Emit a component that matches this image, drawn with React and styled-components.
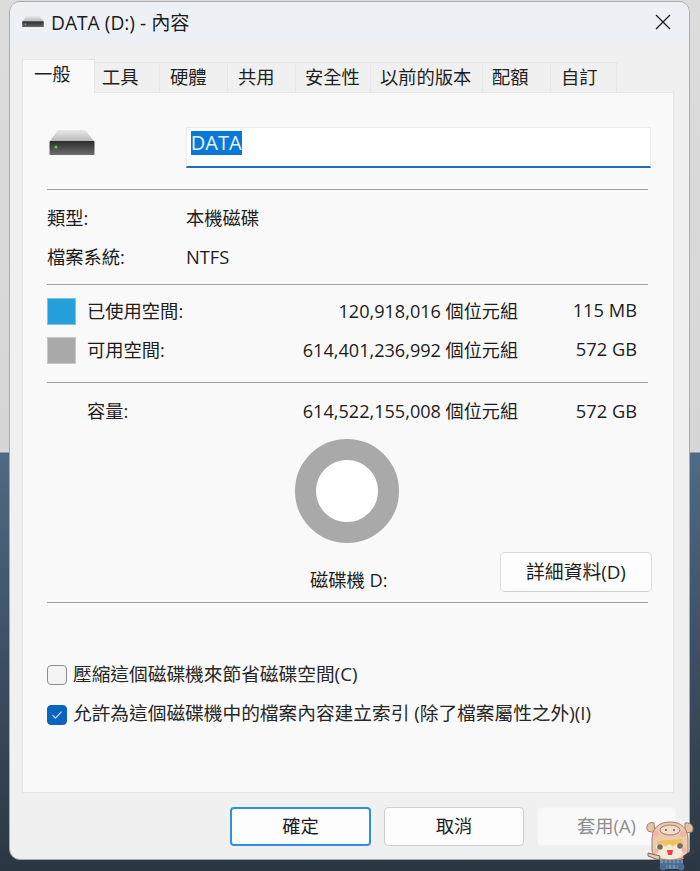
import React from "react";
import styled, { createGlobalStyle } from "styled-components";

const GlobalStyle = createGlobalStyle`
  html, body {
    margin: 0;
    padding: 0;
  }
  body {
    width: 700px;
    height: 871px;
    overflow: hidden;
    font-family: "Open Sans", "Noto Sans CJK TC", sans-serif;
  }
`;

const tabs = [
  { label: "一般", width: 73, pad: 11, active: true },
  { label: "工具", width: 65, pad: 7 },
  { label: "硬體", width: 68, pad: 10 },
  { label: "共用", width: 68, pad: 10 },
  { label: "安全性", width: 75, pad: 9 },
  { label: "以前的版本", width: 112, pad: 9 },
  { label: "配額", width: 68, pad: 9 },
  { label: "自訂", width: 66, pad: 10 },
];

const DriveIcon = ({ size = 46, id = "big" }) => (
  <svg width={size} height={size * 0.5435} viewBox="0 0 46 25">
    <defs>
      <linearGradient id={`${id}Top`} x1="0" y1="0" x2="0" y2="1">
        <stop offset="0" stopColor="#e8e8e8" />
        <stop offset="1" stopColor="#b9b9b9" />
      </linearGradient>
      <linearGradient id={`${id}Front`} x1="0" y1="0" x2="0" y2="1">
        <stop offset="0" stopColor="#2b2b2b" />
        <stop offset="1" stopColor="#6f6f6f" />
      </linearGradient>
    </defs>
    <path d="M9 0h27l9 11H1z" fill={`url(#${id}Top)`} />
    <rect x="0.5" y="11" width="45" height="14" rx="1" fill={`url(#${id}Front)`} />
    <circle cx="7" cy="17" r="1.6" fill="#3ddc3d" />
  </svg>
);

const Mascot = () => (
  <svg width="50" height="51" viewBox="0 0 50 51">
    <path d="M9 3C3 1 0 7 3 11l7 2zM40 3c6-1 10 4 7 9l-7 1z" fill="#e6c2a4" stroke="#9a7f6c" strokeWidth="1" />
    <path d="M7 20C7 8 14 2 25 2s18 6 18 18v10c0 7-8 10-18 10S7 37 7 30z" fill="#ebcbae" stroke="#9a7f6c" strokeWidth="1" />
    <ellipse cx="25" cy="10" rx="10" ry="5" fill="#f3dcc7" stroke="#9a7f6c" strokeWidth="1" />
    <circle cx="21" cy="10" r="1" fill="#7a5c4a" />
    <circle cx="29" cy="10" r="1" fill="#7a5c4a" />
    <circle cx="11" cy="14" r="3" fill="#f3b3ae" />
    <circle cx="38" cy="14" r="3" fill="#f3b3ae" />
    <path d="M12 21l25-2 1 8-5-3-3 3-4-3-4 3-3-3-7 4z" fill="#f1c15c" />
    <path d="M11 25l6-1 3 3 4-3 4 3 3-3 3 0 4 3v5c0 5-6 7-13 7s-14-2-14-7z" fill="#f7ead9" />
    <circle cx="15" cy="27" r="2.8" fill="#6f6a66" />
    <circle cx="35" cy="26" r="2.8" fill="#6f6a66" />
    <path d="M22 30h6l-1 5h-4z" fill="#e5453f" />
    <circle cx="11" cy="31" r="2.6" fill="#f3b3ae" />
    <circle cx="39" cy="30" r="2.6" fill="#f3b3ae" />
    <path d="M3 33l12 3-1 4-11-4z" fill="#ebcbae" stroke="#594a42" strokeWidth="0.8" />
    <path d="M38 36l11-7 1 4-11 7z" fill="#3c3c40" />
    <rect x="15" y="40" width="23" height="9" fill="#6e8fb2" />
    <path d="M19 40v9M23 40v9M27 40v9M31 40v9M35 40v9M15 44h23" stroke="#3b5a7c" strokeWidth="1" />
    <circle cx="18" cy="47" r="3.4" fill="#4d6c8c" />
    <circle cx="36" cy="47" r="3.4" fill="#4d6c8c" />
  </svg>
);

const App = () => (
  <>
    <GlobalStyle />
    <Screen>
      <WindowFrame>
        <TitleBar>
          <TitleIcon>
            <DriveIcon size={22} id="small" />
          </TitleIcon>
          <TitleText>DATA (D:) - 內容</TitleText>
          <CloseButton>
            <svg width="16" height="16" viewBox="0 0 16 16">
              <path d="M1 1l14 14M15 1L1 15" stroke="#1a1a1a" strokeWidth="1.3" fill="none" />
            </svg>
          </CloseButton>
        </TitleBar>

        <TabRow>
          {tabs.map((t) => (
            <Tab key={t.label} $active={t.active} $width={t.width} $pad={t.pad}>
              {t.label}
            </Tab>
          ))}
        </TabRow>

        <Panel>
          <NameRow>
            <BigIconBox>
              <DriveIcon />
            </BigIconBox>
            <NameInput>
              <Selected>DATA</Selected>
            </NameInput>
          </NameRow>
          <Divider />

          <InfoRow>
            <InfoLabel>類型:</InfoLabel>
            <span>本機磁碟</span>
          </InfoRow>
          <InfoRow>
            <InfoLabel>檔案系統:</InfoLabel>
            <span>NTFS</span>
          </InfoRow>
          <Divider $top={16} />

          <SpaceRow $top={13}>
            <Swatch $color="#26a0da" $border="#7cc5ea" />
            <SpaceLabel>已使用空間:</SpaceLabel>
            <Bytes>120,918,016 個位元組</Bytes>
            <Human>115 MB</Human>
          </SpaceRow>
          <SpaceRow $top={12}>
            <Swatch $color="#a9a9a9" $border="#c6c6c6" />
            <SpaceLabel>可用空間:</SpaceLabel>
            <Bytes>614,401,236,992 個位元組</Bytes>
            <Human>572 GB</Human>
          </SpaceRow>
          <Divider $top={18} />

          <SpaceRow $top={17} $short>
            <SwatchGap />
            <SpaceLabel>容量:</SpaceLabel>
            <Bytes>614,522,155,008 個位元組</Bytes>
            <Human>572 GB</Human>
          </SpaceRow>

          <Donut />

          <DriveRow>
            <DriveLabel>磁碟機 D:</DriveLabel>
            <DetailButton>詳細資料(D)</DetailButton>
          </DriveRow>
          <Divider $top={10} />

          <CheckRow $top={60}>
            <CheckBox />
            <CheckText>壓縮這個磁碟機來節省磁碟空間(C)</CheckText>
          </CheckRow>
          <CheckRow $top={16}>
            <CheckBox $checked>
              <svg width="12" height="10" viewBox="0 0 12 10">
                <path d="M1.5 5.2l3 3 6-6.5" stroke="#cfe3f7" strokeWidth="1.1" fill="none" />
              </svg>
            </CheckBox>
            <CheckText>允許為這個磁碟機中的檔案內容建立索引 (除了檔案屬性之外)(I)</CheckText>
          </CheckRow>
        </Panel>

        <Footer>
          <FootButton $primary $width={141}>確定</FootButton>
          <FootButton $width={140}>取消</FootButton>
          <FootButton $disabled $width={139}>套用(A)</FootButton>
        </Footer>
      </WindowFrame>
      <Watermark>
        <Mascot />
      </Watermark>
    </Screen>
  </>
);

const Screen = styled.div`
  position: relative;
  width: 700px;
  height: 871px;
  overflow: hidden;
  padding: 1px 0 0 9px;
  box-sizing: border-box;
  background: linear-gradient(
    to bottom,
    #dcdcdc 0,
    #d6d6d6 452px,
    #4f6a85 453px,
    #3f5165 640px,
    #2b3743 871px
  );
`;

const WindowFrame = styled.div`
  width: 679px;
  height: 857px;
  background: #f0f0f0;
  border: 1px solid #a9abad;
  border-radius: 11px;
  overflow: hidden;
  color: #1c1c1c;
  font-size: 18.3px;
`;

const TitleBar = styled.div`
  box-sizing: border-box;
  display: flex;
  align-items: center;
  height: 43px;
  background: #edf1f6;
  padding: 0 18px 4px 12px;
`;

const TitleIcon = styled.div`
  display: flex;
  margin-right: 7px;
`;

const TitleText = styled.div`
  font-size: 19.2px;
  flex: 1;
`;

const CloseButton = styled.div`
  display: flex;
`;

const TabRow = styled.div`
  display: flex;
  align-items: flex-end;
  height: 47px;
  padding-left: 12px;
`;

const Tab = styled.div`
  box-sizing: border-box;
  width: ${(p) => p.$width}px;
  height: ${(p) => (p.$active ? 34 : 30)}px;
  padding: ${(p) => (p.$active ? "1px" : "0")} 0 ${(p) => (p.$active ? "0" : "2px")} ${(p) => p.$pad}px;
  display: flex;
  align-items: ${(p) => (p.$active ? "flex-start" : "center")};
  background: ${(p) => (p.$active ? "#f9f9f9" : "#f0f0f0")};
  border: 1px solid #e6e6e6;
  border-left-width: ${(p) => (p.$active ? 1 : 0)}px;
  border-bottom: 0;
  position: relative;
  line-height: 26px;
  color: #1f1f1f;
  margin-bottom: ${(p) => (p.$active ? -1 : 0)}px;
`;

const Panel = styled.div`
  box-sizing: border-box;
  margin-left: 12px;
  width: 652px;
  height: 701px;
  background: #f9f9f9;
  border: 1px solid #e6e6e6;
  padding: 34px 22px 0 24px;
`;

const NameRow = styled.div`
  display: flex;
  align-items: flex-start;
`;

const BigIconBox = styled.div`
  width: 139px;
  display: flex;
  padding: 3px 0 0 2px;
  box-sizing: border-box;
`;

const NameInput = styled.div`
  box-sizing: border-box;
  width: 466px;
  height: 41px;
  background: #fff;
  border: 1px solid #ececec;
  border-bottom: 2px solid #1a6fc4;
  padding: 3px 0 0 4px;
  line-height: 24px;
`;

const Selected = styled.span`
  display: inline-block;
  background: #0a78d7;
  color: #e8f2fb;
  font-size: 20px;
  line-height: 24px;
`;

const Divider = styled.div`
  height: 1px;
  background: #a0a0a0;
  margin-top: ${(p) => p.$top ?? 21}px;
  margin-right: 3px;
`;

const InfoRow = styled.div`
  display: flex;
  margin-top: 17px;
  line-height: 22px;
`;

const InfoLabel = styled.span`
  width: 139px;
`;

const SpaceRow = styled.div`
  display: flex;
  align-items: center;
  height: ${(p) => (p.$short ? 24 : 27)}px;
  margin-top: ${(p) => p.$top}px;
`;

const Swatch = styled.div`
  box-sizing: border-box;
  width: 29px;
  height: 27px;
  background: ${(p) => p.$color};
  border: 1px solid ${(p) => p.$border};
`;

const SwatchGap = styled.div`
  width: 29px;
`;

const SpaceLabel = styled.span`
  margin: -4px 0 0 11px;
  width: 172px;
`;

const Bytes = styled.span`
  margin-top: -4px;
  width: 259px;
  text-align: right;
  font-size: 18.1px;
`;

const Human = styled.span`
  margin-top: -4px;
  flex: 1;
  text-align: right;
  padding-right: 14px;
`;

const Donut = styled.div`
  box-sizing: border-box;
  width: 104px;
  height: 104px;
  margin: 15px 0 0 248px;
  border-radius: 50%;
  background: #fff;
  border: 21px solid #a9a9a9;
`;

const DriveRow = styled.div`
  display: flex;
  align-items: flex-end;
  justify-content: space-between;
  margin-top: 9px;
`;

const DriveLabel = styled.span`
  margin-left: 263px;
  padding-bottom: 1px;
  line-height: 22px;
`;

const DetailButton = styled.button`
  box-sizing: border-box;
  width: 152px;
  height: 40px;
  padding-bottom: 4px;
  margin-right: -1px;
  background: #fdfdfd;
  border: 1px solid #d9d9d9;
  border-bottom-color: #cfcfcf;
  border-radius: 5px;
  font: inherit;
  font-size: 18.8px;
  color: inherit;
`;

const CheckRow = styled.div`
  display: flex;
  align-items: center;
  gap: 6px;
  margin-top: ${(p) => p.$top}px;
  line-height: 24px;
  font-size: 18.7px;
  color: #262626;
`;

const CheckText = styled.span`
  margin-top: -1px;
`;

const CheckBox = styled.div`
  box-sizing: border-box;
  width: 20px;
  height: 20px;
  margin-top: ${(p) => (p.$checked ? 2 : 0)}px;
  border-radius: 4px;
  display: flex;
  align-items: center;
  justify-content: center;
  background: ${(p) => (p.$checked ? "#0a64c0" : "#f3f3f3")};
  border: 1px solid ${(p) => (p.$checked ? "#0a64c0" : "#8f8f8f")};
`;

const Footer = styled.div`
  display: flex;
  justify-content: flex-end;
  gap: 13px;
  padding: 14px 13px 0 0;
`;

const FootButton = styled.button`
  box-sizing: border-box;
  width: ${(p) => p.$width}px;
  height: 39px;
  padding-bottom: 4px;
  font: inherit;
  border-radius: 4px;
  background: ${(p) => (p.$disabled ? "#f9f9f9" : "#fdfdfd")};
  color: ${(p) => (p.$disabled ? "#8e8e8e" : "#1c1c1c")};
  border: ${(p) =>
    p.$primary
      ? "2px solid #2f8fe0"
      : p.$disabled
        ? "1px solid #f3f3f3"
        : "1px solid #cfcfcf"};
`;

const Watermark = styled.div`
  position: absolute;
  right: 5px;
  bottom: 0;
  display: flex;
`;

export default App;
